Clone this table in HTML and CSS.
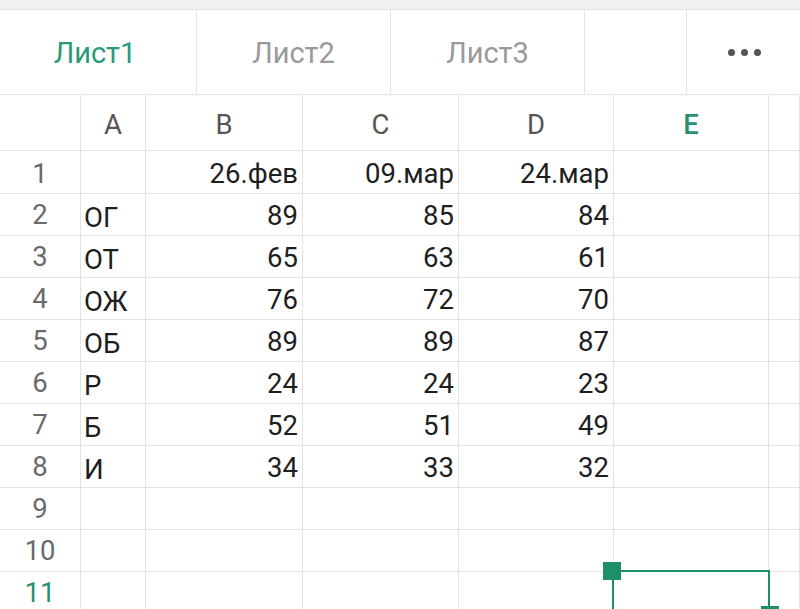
FILE: index.html
```html
<!DOCTYPE html>
<html lang="ru">
<head>
<meta charset="utf-8">
<title>Лист1</title>
<link rel="stylesheet" href="styles.css">
</head>
<body>
<div class="app">
  <div class="statusbar"></div>
  <div class="tabs">
    <div class="tab active">Лист1</div>
    <div class="tab">Лист2</div>
    <div class="tab">Лист3</div>
    <div class="tab empty"></div>
    <div class="tab more"><span class="dot"></span><span class="dot"></span><span class="dot"></span></div>
  </div>
  <div class="sheet">
    <div class="c hd corner"></div><div class="c hd">A</div><div class="c hd">B</div><div class="c hd">C</div><div class="c hd">D</div><div class="c hd sel">E</div><div class="c hd"></div>

    <div class="c rn r1">1</div><div class="c r1"></div><div class="c num r1">26.фев</div><div class="c num r1">09.мар</div><div class="c num r1">24.мар</div><div class="c r1"></div><div class="c r1"></div>

    <div class="c rn">2</div><div class="c txt">ОГ</div><div class="c num">89</div><div class="c num">85</div><div class="c num">84</div><div class="c"></div><div class="c"></div>
    <div class="c rn">3</div><div class="c txt">ОТ</div><div class="c num">65</div><div class="c num">63</div><div class="c num">61</div><div class="c"></div><div class="c"></div>
    <div class="c rn">4</div><div class="c txt">ОЖ</div><div class="c num">76</div><div class="c num">72</div><div class="c num">70</div><div class="c"></div><div class="c"></div>
    <div class="c rn">5</div><div class="c txt">ОБ</div><div class="c num">89</div><div class="c num">89</div><div class="c num">87</div><div class="c"></div><div class="c"></div>
    <div class="c rn">6</div><div class="c txt">Р</div><div class="c num">24</div><div class="c num">24</div><div class="c num">23</div><div class="c"></div><div class="c"></div>
    <div class="c rn">7</div><div class="c txt">Б</div><div class="c num">52</div><div class="c num">51</div><div class="c num">49</div><div class="c"></div><div class="c"></div>
    <div class="c rn">8</div><div class="c txt">И</div><div class="c num">34</div><div class="c num">33</div><div class="c num">32</div><div class="c"></div><div class="c"></div>
    <div class="c rn">9</div><div class="c"></div><div class="c"></div><div class="c"></div><div class="c"></div><div class="c"></div><div class="c"></div>
    <div class="c rn">10</div><div class="c"></div><div class="c"></div><div class="c"></div><div class="c"></div><div class="c"></div><div class="c"></div>
    <div class="c rn sel">11</div><div class="c"></div><div class="c"></div><div class="c"></div><div class="c"></div>
    <div class="c active-cell"><div class="selection"><span class="handle tl"></span><span class="handle br"></span></div></div><div class="c"></div>
  </div>
</div>
</body>
</html>
```

FILE: styles.css
```css
* { box-sizing: border-box; margin: 0; padding: 0; }
html, body { width: 800px; height: 609px; overflow: hidden; background: #fff; }
body { font-family: Roboto, "Noto Sans", "Liberation Sans", sans-serif; color: #222; }

.app { width: 800px; height: 609px; overflow: hidden; }

.statusbar {
  height: 10px;
  background: #f0f0f0;
  border-bottom: 1px solid #e2e2e2;
}

.tabs {
  display: grid;
  grid-template-columns: 197px 194px 194px 102px 1fr;
  height: 85px;
  border-bottom: 1px solid #e4e4e4;
}
.tab {
  display: flex;
  align-items: center;
  justify-content: center;
  border-right: 1px solid #e6e6e6;
  font-size: 29px;
  color: #9a9a9a;
  padding-top: 2px;
}
.tab.active { color: #2b9a77; padding-right: 6px; }
.tab.more { border-right: none; gap: 6px; padding-top: 0; padding-left: 2px; }
.dot { width: 7px; height: 7px; border-radius: 50%; background: #555; }

.sheet {
  display: grid;
  grid-template-columns: 81px 65px 157px 156px 155px 155px 1fr;
  grid-template-rows: 56px 43px repeat(10, 42px);
}
.c {
  border-right: 1px solid #e3e3e3;
  border-bottom: 1px solid #e3e3e3;
  font-size: 27.5px;
  display: flex;
  align-items: center;
  white-space: nowrap;
  color: #1e1e1e;
}
.c.r1 { padding-top: 2px; }
.hd { justify-content: center; color: #555; padding-top: 4px; }
.hd.sel { color: #2a9070; font-weight: 500; }
.rn { justify-content: center; color: #6a6a6a; }
.rn.sel { color: #2a9070; }
.num { justify-content: flex-end; padding-right: 4px; padding-top: 2px; }
.txt { padding-left: 3px; padding-top: 5px; }

.active-cell { position: relative; }
.selection {
  position: absolute;
  top: -2px;
  left: -2px;
  right: -2px;
  bottom: -6px;
  border: 2px solid #1f8f6b;
}
.handle {
  position: absolute;
  width: 18px;
  height: 18px;
  background: #1f8f6b;
}
.handle.tl { top: -10px; left: -11px; }
.handle.br { top: 34px; right: -11px; }
```
